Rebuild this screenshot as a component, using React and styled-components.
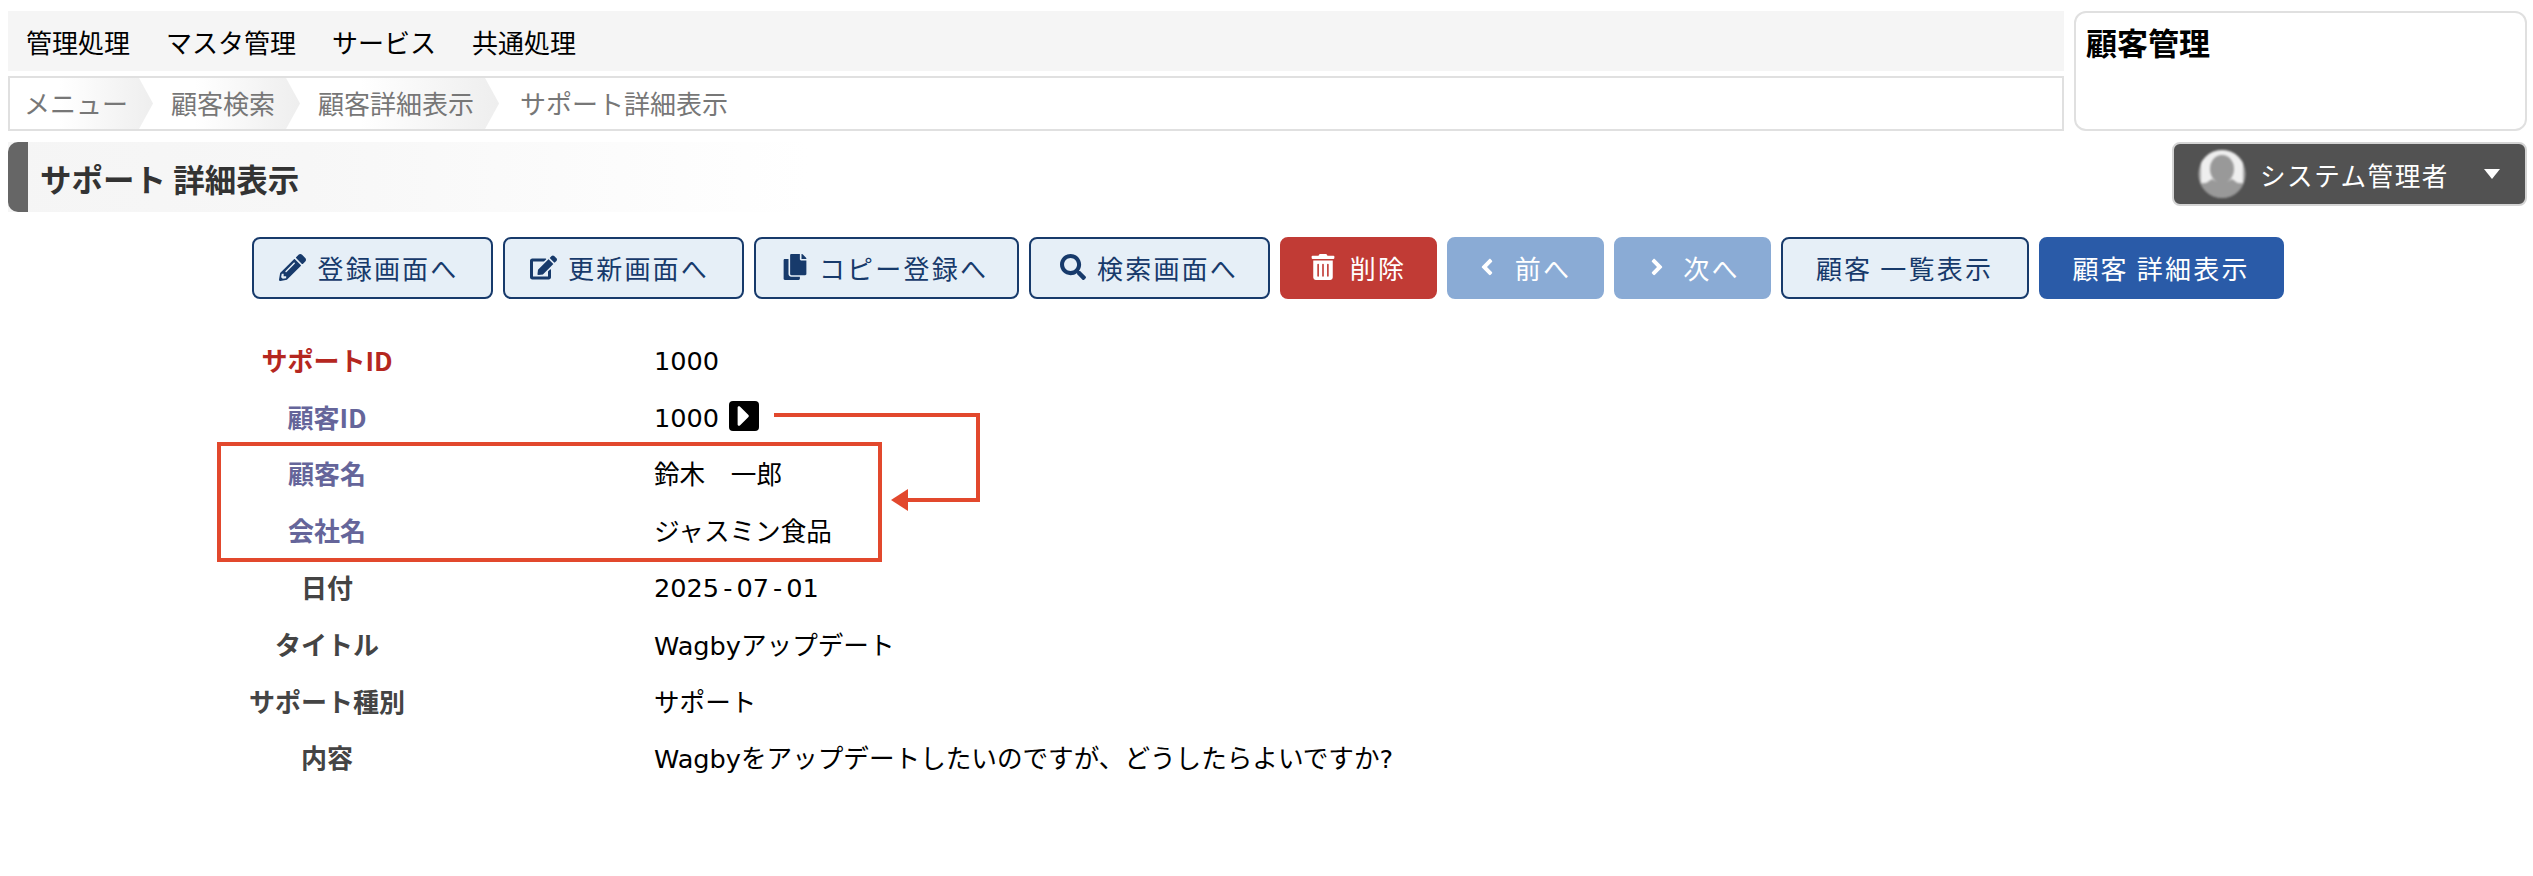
import React from "react";
import styled, { createGlobalStyle } from "styled-components";
import { FaPencilAlt, FaEdit, FaCopy, FaSearch, FaTrashAlt, FaAngleLeft, FaAngleRight, FaCaretRight } from "react-icons/fa";

const Global = createGlobalStyle`
  html, body { margin: 0; padding: 0; background: #fff; }
  body { font-family: "DejaVu Sans", "Noto Sans CJK JP", sans-serif; color: #000; }
`;
const Page = styled.div`
  position: relative;
  width: 2533px;
  height: 876px;
  overflow: hidden;
  padding: 11px 6px 0 8px;
  box-sizing: border-box;
`;
const Top = styled.div`
  display: flex;
  gap: 10px;
`;
const TopLeft = styled.div`
  flex: 1;
  display: flex;
  flex-direction: column;
  gap: 5px;
`;
const MenuBar = styled.nav`
  height: 60px;
  background: #f5f5f5;
  display: flex;
  align-items: center;
  gap: 36px;
  padding-left: 18px;
  font-family: "Noto Sans CJK JP", sans-serif;
  font-size: 26px;
`;
const Crumbs = styled.div`
  height: 55px;
  box-sizing: border-box;
  border: 2px solid #e0e0e0;
  display: flex;
  background: #fff;
  font-family: "Noto Sans CJK JP", sans-serif;
  font-size: 26px;
  color: #777;
`;
const Crumb = styled.div`
  position: relative;
  z-index: ${p => p.$z};
  display: flex;
  align-items: center;
  box-sizing: border-box;
  padding: 0 25px 3px ${p => (p.$first ? 14 : 32)}px;
  background: linear-gradient(to right, #fff 35%, #eeeeee);
  clip-path: polygon(0 0, calc(100% - 14px) 0, 100% 50%, calc(100% - 14px) 100%, 0 100%);
  margin-right: -14px;
`;
const CrumbLast = styled.div`
  display: flex;
  align-items: center;
  padding: 0 0 3px 35px;
`;
const Card = styled.div`
  width: 453px;
  height: 120px;
  box-sizing: border-box;
  border: 2px solid #e0e0e0;
  border-radius: 12px;
  padding: 9px 10px;
  font-family: "Noto Sans CJK JP", sans-serif;
  font-weight: 700;
  font-size: 31px;
  line-height: 40px;
`;
const TitleRow = styled.div`
  display: flex;
  justify-content: space-between;
  align-items: flex-start;
  margin-top: 11px;
  background: linear-gradient(to right, #f5f5f5 0, #f7f7f7 300px, #fff 800px);
`;
const Title = styled.h1`
  margin: 0;
  height: 70px;
  box-sizing: border-box;
  padding: 2px 0 0 12px;
  display: flex;
  align-items: center;
  border-left: 20px solid #666;
  border-radius: 10px 0 0 10px;
  font-family: "Noto Sans CJK JP", sans-serif;
  font-weight: 700;
  font-size: 31.5px;
  color: #333;
`;
const UserBtn = styled.div`
  width: 355px;
  height: 64px;
  box-sizing: border-box;
  border: 2px solid #d4d4d4;
  border-radius: 8px;
  background: #525252;
  color: #fff;
  display: flex;
  align-items: center;
  padding: 0 0 0 23px;
  gap: 13px;
  font-family: "Noto Sans CJK JP", sans-serif;
  font-size: 25.6px;
  letter-spacing: 1.5px;
`;
const Avatar = styled.svg`
  flex: none;
  filter: blur(1.2px);
`;
const Caret = styled.span`
  width: 0;
  height: 0;
  margin-left: 22px;
  border-left: 8px solid transparent;
  border-right: 8px solid transparent;
  border-top: 10px solid #fff;
`;
const Actions = styled.div`
  display: flex;
  justify-content: center;
  gap: 10px;
  margin-top: 25px;
`;
const variants = {
  outline: "background:#e6eff7;border-color:#173a6b;color:#173a6b;",
  danger: "background:#c13b35;border-color:#c13b35;color:#fff;",
  muted: "background:#8aabd5;border-color:#8aabd5;color:#fff;",
  primary: "background:#2a5ba8;border-color:#2a5ba8;color:#fff;",
};
const Btn = styled.button`
  ${p => variants[p.$v]}
  width: ${p => p.$w}px;
  height: 62px;
  box-sizing: border-box;
  border-width: 2px;
  border-style: solid;
  border-radius: 8px;
  display: flex;
  align-items: center;
  justify-content: center;
  gap: ${p => p.$gap || 11}px;
  padding: 0 ${p => p.$pr || 0}px 2px 0;
  font-family: "Noto Sans CJK JP", sans-serif;
  font-size: 26px;
  letter-spacing: 2.2px;
  svg { flex: none; }
`;
const Rows = styled.div`
  margin-top: 32px;
  display: flex;
  flex-direction: column;
`;
const Row = styled.div`
  display: grid;
  grid-template-columns: 638px 1fr;
  height: 56.8px;
  align-items: center;
`;
const Label = styled.div`
  text-align: center;
  font-family: "Noto Sans CJK JP", sans-serif;
  font-weight: 700;
  font-size: 26px;
  color: ${p => p.$c};
`;
const Value = styled.div`
  display: flex;
  align-items: center;
  gap: 10px;
  padding-left: 8px;
  font-size: 25.6px;
  font-family: "DejaVu Sans", "Noto Sans CJK JP", sans-serif;
`;
const ValueText = styled.span`
  padding-top: ${p => (p.$latin ? 3 : 0)}px;
`;
const Hyphen = styled.span`
  margin: 0 4px;
`;
const GoBtn = styled.span`
  width: 30px;
  height: 30px;
  border-radius: 4px;
  background: #000;
  color: #fff;
  display: inline-flex;
  align-items: center;
  justify-content: center;
`;
const Annotation = styled.svg`
  position: absolute;
  left: 0;
  top: 0;
  pointer-events: none;
`;

const rows = [
  ["サポートID", "1000", "#b5271f", false, true],
  ["顧客ID", "1000", "#65659a", true, true],
  ["顧客名", "鈴木　一郎", "#65659a"],
  ["会社名", "ジャスミン食品", "#65659a"],
  ["日付", "2025-07-01", "#444", false, true],
  ["タイトル", "Wagbyアップデート", "#444"],
  ["サポート種別", "サポート", "#444"],
  ["内容", "Wagbyをアップデートしたいのですが、どうしたらよいですか?", "#444"],
];

const withHyphens = v =>
  v.split("-").flatMap((part, i) => (i ? [<Hyphen key={i}>-</Hyphen>, part] : [part]));

export default function App() {
  return (
    <Page>
      <Global />
      <Top>
        <TopLeft>
          <MenuBar>
            <span>管理処理</span><span>マスタ管理</span><span>サービス</span><span>共通処理</span>
          </MenuBar>
          <Crumbs>
            <Crumb $first $z={3}>メニュー</Crumb>
            <Crumb $z={2}>顧客検索</Crumb>
            <Crumb $z={1}>顧客詳細表示</Crumb>
            <CrumbLast>サポート詳細表示</CrumbLast>
          </Crumbs>
        </TopLeft>
        <Card>顧客管理</Card>
      </Top>
      <TitleRow>
        <Title>サポート 詳細表示</Title>
        <UserBtn>
          <Avatar width="50" height="50" viewBox="0 0 50 50">
            <defs>
              <clipPath id="av"><ellipse cx="25" cy="25" rx="23.5" ry="24" /></clipPath>
            </defs>
            <g clipPath="url(#av)">
              <rect width="50" height="50" fill="#a8a8a8" />
              <path d="M4 0h42v34H4z" fill="#eeeeee" />
              <ellipse cx="25" cy="20" rx="12" ry="14" fill="#999" />
              <path d="M0 36c8 0 11-3 15-6 4 4 16 4 20 0 4 3 7 6 15 6v14H0z" fill="#999" />
            </g>
          </Avatar>
          <span>システム管理者</span>
          <Caret />
        </UserBtn>
      </TitleRow>
      <Actions>
        <Btn $v="outline" $w={241} $pr={6}><FaPencilAlt size={27} />登録画面へ</Btn>
        <Btn $v="outline" $w={241} $pr={7}><FaEdit size={27} />更新画面へ</Btn>
        <Btn $v="outline" $w={265} $pr={2}><FaCopy size={26} />コピー登録へ</Btn>
        <Btn $v="outline" $w={241}><FaSearch size={26} />検索画面へ</Btn>
        <Btn $v="danger" $w={157} $gap={14}><FaTrashAlt size={26} />削除</Btn>
        <Btn $v="muted" $w={157} $gap={15} $pr={5}><FaAngleLeft size={26} />前へ</Btn>
        <Btn $v="muted" $w={157} $gap={13}><FaAngleRight size={26} />次へ</Btn>
        <Btn $v="outline" $w={248}>顧客 一覧表示</Btn>
        <Btn $v="primary" $w={245}>顧客 詳細表示</Btn>
      </Actions>
      <Rows>
        {rows.map(([l, v, c, go, latin]) => (
          <Row key={l}>
            <Label $c={c}>{l}</Label>
            <Value>
              <ValueText $latin={latin}>{withHyphens(v)}</ValueText>
              {go && <GoBtn><FaCaretRight size={34} /></GoBtn>}
            </Value>
          </Row>
        ))}
      </Rows>
      <Annotation width="2533" height="876" viewBox="0 0 2533 876">
        <rect x="219" y="444" width="661" height="116" fill="none" stroke="#e2482d" strokeWidth="4" />
        <path d="M774 415H978V500H905" fill="none" stroke="#e2482d" strokeWidth="4" />
        <path d="M891 500l17-11v22z" fill="#e2482d" />
      </Annotation>
    </Page>
  );
}
